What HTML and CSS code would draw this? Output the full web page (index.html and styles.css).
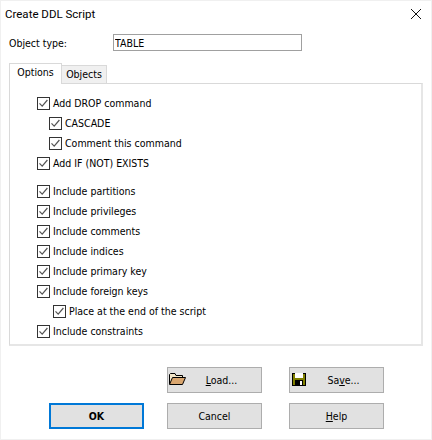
FILE: index.html
```html
<!DOCTYPE html>
<html lang="en">
<head>
    <meta charset="UTF-8">
    <meta name="viewport" content="width=device-width, initial-scale=1.0">
    <title>Create DDL Script</title>
    <link rel="stylesheet" href="styles.css">
</head>
<body>
    <svg class="defs" width="0" height="0">
        <symbol id="tick" viewBox="0 0 13 13">
            <path d="M2.5 6.3 L5.2 9.2 L10.4 3" fill="none" stroke="#555" stroke-width="1.2"/>
        </symbol>
    </svg>
    <div class="dialog">
        <div class="titlebar">
            <span>Create DDL Script</span>
            <svg class="close" width="10" height="10" viewBox="0 0 10 10">
                <path d="M0 0 L10 10 M10 0 L0 10" stroke="#111" stroke-width="1"/>
            </svg>
        </div>
        <div class="object-row">
            <label class="object-label" for="objtype">Object type:</label>
            <input class="object-input" id="objtype" type="text" value="TABLE">
        </div>
        <div class="tabs">
            <div class="tab active">Options</div>
            <div class="tab">Objects</div>
        </div>
        <div class="panel">
            <div class="check"><span class="box"><svg width="13" height="13"><use href="#tick"/></svg></span>Add DROP command</div>
            <div class="check sub"><span class="box"><svg width="13" height="13"><use href="#tick"/></svg></span>CASCADE</div>
            <div class="check sub"><span class="box"><svg width="13" height="13"><use href="#tick"/></svg></span>Comment this command</div>
            <div class="check"><span class="box"><svg width="13" height="13"><use href="#tick"/></svg></span>Add IF (NOT) EXISTS</div>
            <div class="spacer"></div>
            <div class="check"><span class="box"><svg width="13" height="13"><use href="#tick"/></svg></span>Include partitions</div>
            <div class="check"><span class="box"><svg width="13" height="13"><use href="#tick"/></svg></span>Include privileges</div>
            <div class="check"><span class="box"><svg width="13" height="13"><use href="#tick"/></svg></span>Include comments</div>
            <div class="check"><span class="box"><svg width="13" height="13"><use href="#tick"/></svg></span>Include indices</div>
            <div class="check"><span class="box"><svg width="13" height="13"><use href="#tick"/></svg></span>Include primary key</div>
            <div class="check"><span class="box"><svg width="13" height="13"><use href="#tick"/></svg></span>Include foreign keys</div>
            <div class="check sub2"><span class="box"><svg width="13" height="13"><use href="#tick"/></svg></span>Place at the end of the script</div>
            <div class="check"><span class="box"><svg width="13" height="13"><use href="#tick"/></svg></span>Include constraints</div>
        </div>
        <div class="buttons">
            <button class="btn has-icon" type="button">
                <svg class="btn-icon" width="17" height="12" viewBox="0 0 17 12">
                    <path d="M0.5 11 V1.5 L1.5 0.5 H6 L7 2.5 H13.5 V4.5" fill="#f3e6c8" stroke="#000"/>
                    <path d="M0.5 11.5 L3.5 4.5 H16.5 L13.5 11.5 Z" fill="#d9a66f" stroke="#000"/>
                </svg>
                <span><u>L</u>oad...</span>
            </button>
            <button class="btn has-icon" type="button">
                <svg class="btn-icon" width="14" height="13" viewBox="0 0 14 13">
                    <rect x="0" y="0" width="14" height="13" fill="#000"/>
                    <rect x="1" y="1" width="12" height="11" fill="#808000"/>
                    <rect x="3" y="0" width="8" height="5" fill="#fff"/>
                    <rect x="3" y="7" width="8" height="6" fill="#000"/>
                    <rect x="8" y="8" width="2" height="4" fill="#fff"/>
                </svg>
                <span>Sa<u>v</u>e...</span>
            </button>
            <button class="btn default" type="button"><span>OK</span></button>
            <button class="btn" type="button"><span>Cancel</span></button>
            <button class="btn" type="button"><span><u>H</u>elp</span></button>
        </div>
    </div>
</body>
</html>
```

FILE: styles.css
```css
html, body {
    margin: 0;
    padding: 0;
}

body {
    width: 432px;
    height: 440px;
    overflow: hidden;
    background-color: #fff;
    font-family: "DejaVu Sans Condensed", "DejaVu Sans", sans-serif;
    font-stretch: condensed;
    font-size: 10.5px;
    color: #000;
}

.defs {
    display: block;
    height: 0;
}

.dialog {
    box-sizing: border-box;
    width: 432px;
    height: 440px;
    border: 1px solid #f0f0f0;
    padding: 0 8px;
}

.titlebar {
    display: flex;
    justify-content: space-between;
    align-items: center;
    height: 25px;
    margin-left: -4px;
    font-family: Roboto, sans-serif;
    font-stretch: normal;
    font-size: 11.5px;
}

.close {
    margin-right: 2px;
}

.object-row {
    display: flex;
    align-items: center;
    height: 17px;
    margin-top: 8px;
}

.object-label {
    width: 104px;
}

.object-input {
    box-sizing: border-box;
    width: 189px;
    height: 17px;
    padding: 0 1px;
    border: 1px solid #a0a0a0;
    font: inherit;
    color: #000;
}

.tabs {
    display: flex;
    align-items: flex-end;
    height: 20px;
    margin-top: 12px;
}

.tab {
    box-sizing: border-box;
    height: 18px;
    width: 45px;
    padding-top: 2px;
    text-align: center;
    background-color: #f0f0f0;
    border: 1px solid #d9d9d9;
    border-bottom: none;
    border-left: none;
}

.tab.active {
    width: 53px;
    height: 21px;
    margin-bottom: -1px;
    padding-top: 2px;
    background-color: #fff;
    border-left: 1px solid #d9d9d9;
    position: relative;
    z-index: 1;
}

.panel {
    box-sizing: border-box;
    width: 414px;
    height: 263px;
    padding: 9px 0 0 27px;
    border: 1px solid #d9d9d9;
    border-right: 2px solid #e6e6e6;
    border-bottom: 2px solid #e6e6e6;
}

.check {
    display: flex;
    align-items: center;
    height: 20px;
}

.check.sub {
    padding-left: 12px;
}

.check.sub2 {
    padding-left: 16px;
}

.spacer {
    height: 8px;
}

.box {
    box-sizing: border-box;
    width: 13px;
    height: 13px;
    margin-right: 3px;
    border: 1px solid #333;
    background-color: #fff;
    flex: none;
}

.box svg {
    display: block;
    margin: -1px;
}

.buttons {
    display: grid;
    grid-template-columns: 118px 122px 95px;
    grid-template-rows: 26px 26px;
    row-gap: 10px;
    margin: 21px 0 0 40px;
}

.buttons .btn:nth-child(1) {
    grid-column: 2;
}

.buttons .btn:nth-child(2) {
    grid-column: 3;
}

.btn {
    position: relative;
    box-sizing: border-box;
    display: flex;
    align-items: center;
    justify-content: center;
    width: 95px;
    padding: 0;
    font: inherit;
    color: #000;
    background-color: #e1e1e1;
    border: 1px solid #adadad;
}

.btn.has-icon {
    padding-left: 14px;
}

.btn.default {
    font-weight: bold;
    border: 2px solid #0078d7;
}

.btn-icon {
    position: absolute;
    left: 2px;
    top: 5px;
}

.btn:first-child .btn-icon {
    left: 1px;
}
```
